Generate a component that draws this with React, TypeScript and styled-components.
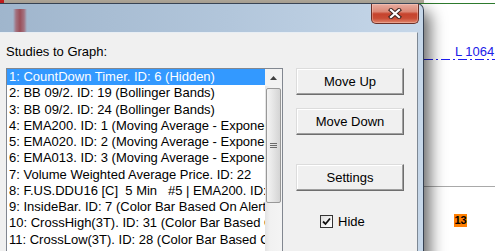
import styled, { createGlobalStyle } from 'styled-components';

const studies = [
  '1: CountDown Timer. ID: 6 (Hidden)',
  '2: BB 09/2. ID: 19 (Bollinger Bands)',
  '3: BB 09/2. ID: 24 (Bollinger Bands)',
  '4: EMA200. ID: 1 (Moving Average - Exponential)',
  '5: EMA020. ID: 2 (Moving Average - Exponential)',
  '6: EMA013. ID: 3 (Moving Average - Exponential)',
  '7: Volume Weighted Average Price. ID: 22',
  '8: F.US.DDU16 [C]  5 Min   #5 | EMA200. ID: 1',
  '9: InsideBar. ID: 7 (Color Bar Based On Alert Condition)',
  '10: CrossHigh(3T). ID: 31 (Color Bar Based On Alert Condition)',
  '11: CrossLow(3T). ID: 28 (Color Bar Based On Alert Condition)',
  '12: BarDifference. ID: 8 (Bar Difference)',
];

const App = () => {
  return (
    <Screen>
      <GlobalStyle />
      <ChartLines width="495" height="251">
        <rect x="0" y="0" width="424" height="3" fill="#b5ac9e" />
        <rect x="0" y="0" width="4" height="3" fill="#c81e1e" />
        <line x1="0" y1="3.5" x2="495" y2="3.5" stroke="#2e7a2e" />
        <line x1="424" y1="59.5" x2="495" y2="59.5" stroke="#1d1df0" strokeDasharray="9 3 2 3" />
        <line x1="424" y1="186.5" x2="495" y2="186.5" stroke="#a9a9a9" />
      </ChartLines>
      <PriceTag>L 1064</PriceTag>
      <Badge>13</Badge>

      <Window>
        <TitleBar>
          <CloseButton>
            <svg width="14" height="11" viewBox="0 0 14 11">
              <path d="M3 2 L11 9 M11 2 L3 9" stroke="#3d2320" strokeWidth="4.2" strokeLinecap="square" />
              <path d="M3 2 L11 9 M11 2 L3 9" stroke="#fff" strokeWidth="2.2" strokeLinecap="square" />
            </svg>
          </CloseButton>
        </TitleBar>
        <Client>
          <Caption>Studies to Graph:</Caption>
          <Body>
            <ListBox>
              <Items>
                {studies.map((s, i) => (
                  <Item key={i} $selected={i === 0}>{s}</Item>
                ))}
              </Items>
              <ScrollBar>
                <ScrollButton>
                  <svg width="7" height="4" viewBox="0 0 7 4">
                    <path d="M0 4 L3.5 0 L7 4 Z" fill="#404040" />
                  </svg>
                </ScrollButton>
                <Thumb>
                  <Grip />
                </Thumb>
              </ScrollBar>
            </ListBox>
            <Actions>
              <Button $top={0}>Move Up</Button>
              <Button $top={13}>Move Down</Button>
              <Button $top={29}>Settings</Button>
              <CheckRow>
                <CheckBox>
                  <svg width="9" height="9" viewBox="0 0 9 9">
                    <path d="M1 4.5 L3.5 7 L8 1.5" stroke="#111" strokeWidth="1.8" fill="none" />
                  </svg>
                </CheckBox>
                <span>Hide</span>
              </CheckRow>
            </Actions>
          </Body>
        </Client>
      </Window>
    </Screen>
  );
};

const GlobalStyle = createGlobalStyle`
  html, body {
    margin: 0;
    padding: 0;
    background: #fff;
    overflow: hidden;
  }
  body {
    font-family: "Liberation Sans", Arial, sans-serif;
  }
`;

const Screen = styled.div`
  position: relative;
  width: 495px;
  height: 251px;
  overflow: hidden;
  background: #fff;
`;

const ChartLines = styled.svg`
  position: absolute;
  left: 0;
  top: 0;
`;

const PriceTag = styled.div`
  position: absolute;
  left: 455px;
  top: 44px;
  font-size: 13px;
  line-height: 15px;
  color: #2020e8;
`;

const Badge = styled.div`
  position: absolute;
  left: 454px;
  top: 214px;
  width: 13px;
  height: 13px;
  background: #ff7f00;
  color: #000;
  font-size: 11px;
  font-weight: bold;
  line-height: 13px;
  text-align: center;
`;

const Window = styled.div`
  position: absolute;
  left: -8px;
  top: 3px;
  width: 432px;
  height: 290px;
  box-sizing: border-box;
  border: 1px solid rgba(35, 45, 60, 0.85);
  border-radius: 0 7px 0 0;
  background: linear-gradient(90deg, #9fb5cc 0%, #b2c6db 55%, #c6d7e9 100%);
  box-shadow: 6px 8px 16px rgba(0, 0, 0, 0.6);
  display: flex;
  flex-direction: column;
`;

const TitleBar = styled.div`
  height: 28px;
  display: flex;
  justify-content: flex-end;
  align-items: flex-start;
  padding-right: 4px;
  background: linear-gradient(
      90deg,
      transparent 20px,
      rgba(165, 45, 50, 0.5) 23px,
      rgba(150, 35, 40, 0.7) 27px,
      rgba(165, 45, 50, 0.5) 31px,
      transparent 34px
    )
    no-repeat 0 5px / 100% 23px;
`;

const CloseButton = styled.div`
  width: 48px;
  height: 20px;
  box-sizing: border-box;
  border: 1px solid #6b3028;
  border-top: none;
  border-radius: 0 0 5px 5px;
  background: linear-gradient(
    180deg,
    #e8ada0 0%,
    #dc8876 40%,
    #c6432d 52%,
    #c94c35 75%,
    #e0866c 100%
  );
  box-shadow: inset 0 0 0 1px rgba(255, 220, 210, 0.35);
  display: flex;
  align-items: center;
  justify-content: center;
`;

const Client = styled.div`
  flex: 1;
  margin: 0 5px 0 7px;
  background: #f0f0f0;
  border-top: 1px solid #e8eef4;
  border-right: 1px solid #7d8894;
  padding: 11px 0 0 6px;
`;

const Caption = styled.div`
  font-size: 13px;
  line-height: 15px;
  color: #000;
  margin-bottom: 9px;
`;

const Body = styled.div`
  display: flex;
  align-items: flex-start;
  gap: 13px;
`;

const ListBox = styled.div`
  width: 277px;
  height: 200px;
  box-sizing: border-box;
  border: 1px solid #828790;
  background: #fff;
  display: flex;
`;

const Items = styled.div`
  flex: 1;
  min-width: 0;
  overflow: hidden;
`;

const Item = styled.div<{ $selected: boolean }>`
  height: 16.25px;
  line-height: 16px;
  padding-left: 2px;
  font-size: 13px;
  white-space: pre;
  overflow: hidden;
  color: ${({ $selected }) => ($selected ? '#fff' : '#000')};
  background: ${({ $selected }) => ($selected ? '#3399ff' : 'transparent')};
`;

const ScrollBar = styled.div`
  width: 17px;
  display: flex;
  flex-direction: column;
  background: linear-gradient(90deg, #e3e3e3 0%, #f1f1f1 30%, #f4f4f4 100%);
`;

const ScrollButton = styled.div`
  height: 17px;
  display: flex;
  align-items: center;
  justify-content: center;
  background: #f2f2f2;
`;

const Thumb = styled.div`
  height: 115px;
  margin: 2px 1px 0 1px;
  box-sizing: border-box;
  border: 1px solid #989898;
  border-radius: 2px;
  background: linear-gradient(90deg, #f4f4f4 0%, #e6e6e6 45%, #d4d4d4 100%);
  display: flex;
  align-items: center;
  justify-content: center;
`;

const Grip = styled.div`
  width: 7px;
  height: 5px;
  background: repeating-linear-gradient(180deg, #6a6a6a 0 1px, transparent 1px 2px);
`;

const Actions = styled.div`
  width: 108px;
  display: flex;
  flex-direction: column;
`;

const Button = styled.div<{ $top: number }>`
  margin-top: ${({ $top }) => $top}px;
  height: 27px;
  box-sizing: border-box;
  border: 1px solid;
  border-color: #dcdcdc #6e6e6e #6e6e6e #dcdcdc;
  box-shadow: inset -1px -1px 0 #a0a0a0, inset 1px 1px 0 #fff;
  background: #f0f0f0;
  font-size: 13px;
  color: #000;
  display: flex;
  align-items: center;
  justify-content: center;
`;

const CheckRow = styled.div`
  margin-top: 24px;
  padding-left: 24px;
  height: 13px;
  display: flex;
  align-items: center;
  gap: 5px;
  font-size: 13px;
  color: #000;
`;

const CheckBox = styled.div`
  width: 13px;
  height: 13px;
  box-sizing: border-box;
  border: 1px solid #333;
  background: linear-gradient(135deg, #dcdcdc 0%, #f4f4f4 60%, #fff 100%);
  display: flex;
  align-items: center;
  justify-content: center;
`;

export default App;
